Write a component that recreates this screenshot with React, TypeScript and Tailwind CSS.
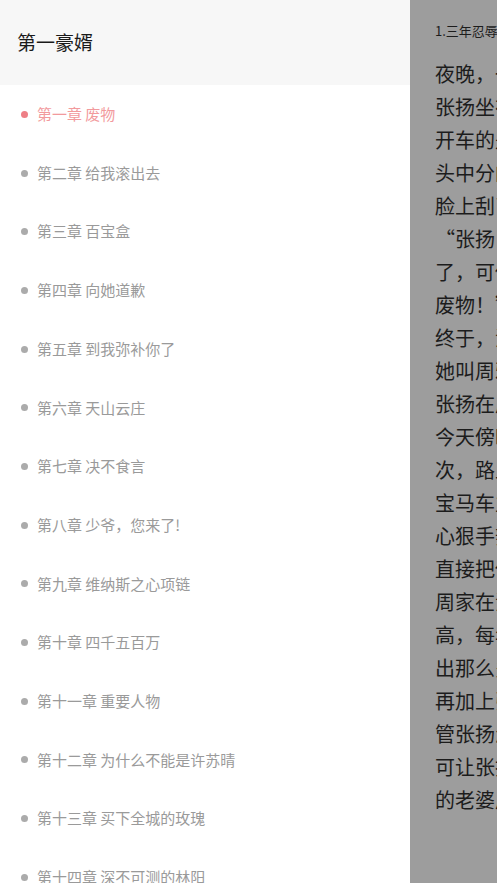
const chapters = [
  "第一章 废物",
  "第二章 给我滚出去",
  "第三章 百宝盒",
  "第四章 向她道歉",
  "第五章 到我弥补你了",
  "第六章 天山云庄",
  "第七章 决不食言",
  "第八章 少爷，您来了!",
  "第九章 维纳斯之心项链",
  "第十章 四千五百万",
  "第十一章 重要人物",
  "第十二章 为什么不能是许苏晴",
  "第十三章 买下全城的玫瑰",
  "第十四章 深不可测的林阳",
];

const lines = [
  "夜晚，一辆黑色的宝马车行驶在马路上。",
  "张扬坐在副驾驶上，一言不发。",
  "开车的是一个年轻男子，梳着油",
  "头中分的发型，神色倨傲，",
  "脸上刮了一层淡淡的粉。",
  "“张扬，我们家收留你三年",
  "了，可你就是一个没用的",
  "废物！”",
  "终于，沉默了许久的女人开口了。",
  "她叫周雅，是张扬的老婆。",
  "张扬在周家当了三年上门女婿。",
  "今天傍晚，他开车送周雅回家，",
  "次，路上不小心蹭到了一辆",
  "宝马车主是江城有名的富二代，",
  "心狠手辣，仗势欺人，",
  "直接把他们拦了下来。",
  "周家在江城只是二流家族，",
  "高，每年的收入有限，拿不",
  "出那么多钱来赔偿。",
  "再加上张扬是个上门女婿，",
  "管张扬怎么解释，周家人都",
  "可让张扬滚出周家，让他",
  "的老婆周雅和他离婚。",
];

export default function App() {
  return (
    <div
      className="flex h-[883px] w-full overflow-hidden bg-white"
      style={{ fontFamily: '"Noto Sans CJK SC", "Noto Sans", sans-serif' }}
    >
      {/* Drawer */}
      <aside className="flex w-[410px] shrink-0 flex-col bg-white">
        <div className="flex h-[85px] shrink-0 items-center bg-[#f7f7f7] pl-[17px]">
          <h1 className="text-[19px] text-[#1a1a1a]">第一豪婿</h1>
        </div>
        <ul className="flex flex-col">
          {chapters.map((title, i) => (
            <li key={i} className="flex h-[58.7px] shrink-0 items-center pl-[21px]">
              <span
                className={
                  i === 0
                    ? "mr-[9px] h-[7px] w-[7px] rounded-full bg-[#ee7f86]"
                    : "mr-[9px] h-[7px] w-[7px] rounded-full bg-[#ababab]"
                }
              />
              <span
                className={
                  i === 0
                    ? "text-[15px] text-[#f29a9d]"
                    : "text-[15px] text-[#9a9a9a]"
                }
              >
                {title}
              </span>
            </li>
          ))}
        </ul>
      </aside>

      {/* Reading page under the dim overlay */}
      <main className="min-w-0 flex-1 overflow-hidden bg-[#9d9d9d] pl-[25px] pt-[21px]">
        <p className="whitespace-nowrap text-[13px] leading-[20px] text-[#1c1c1c]">
          1.三年忍辱，一朝翻身
        </p>
        <div className="mt-[16px] flex flex-col">
          {lines.map((line, i) => (
            <p
              key={i}
              className="whitespace-nowrap text-[20px] leading-[33px] text-[#1c1c1c]"
            >
              {line}
            </p>
          ))}
        </div>
      </main>
    </div>
  );
}
